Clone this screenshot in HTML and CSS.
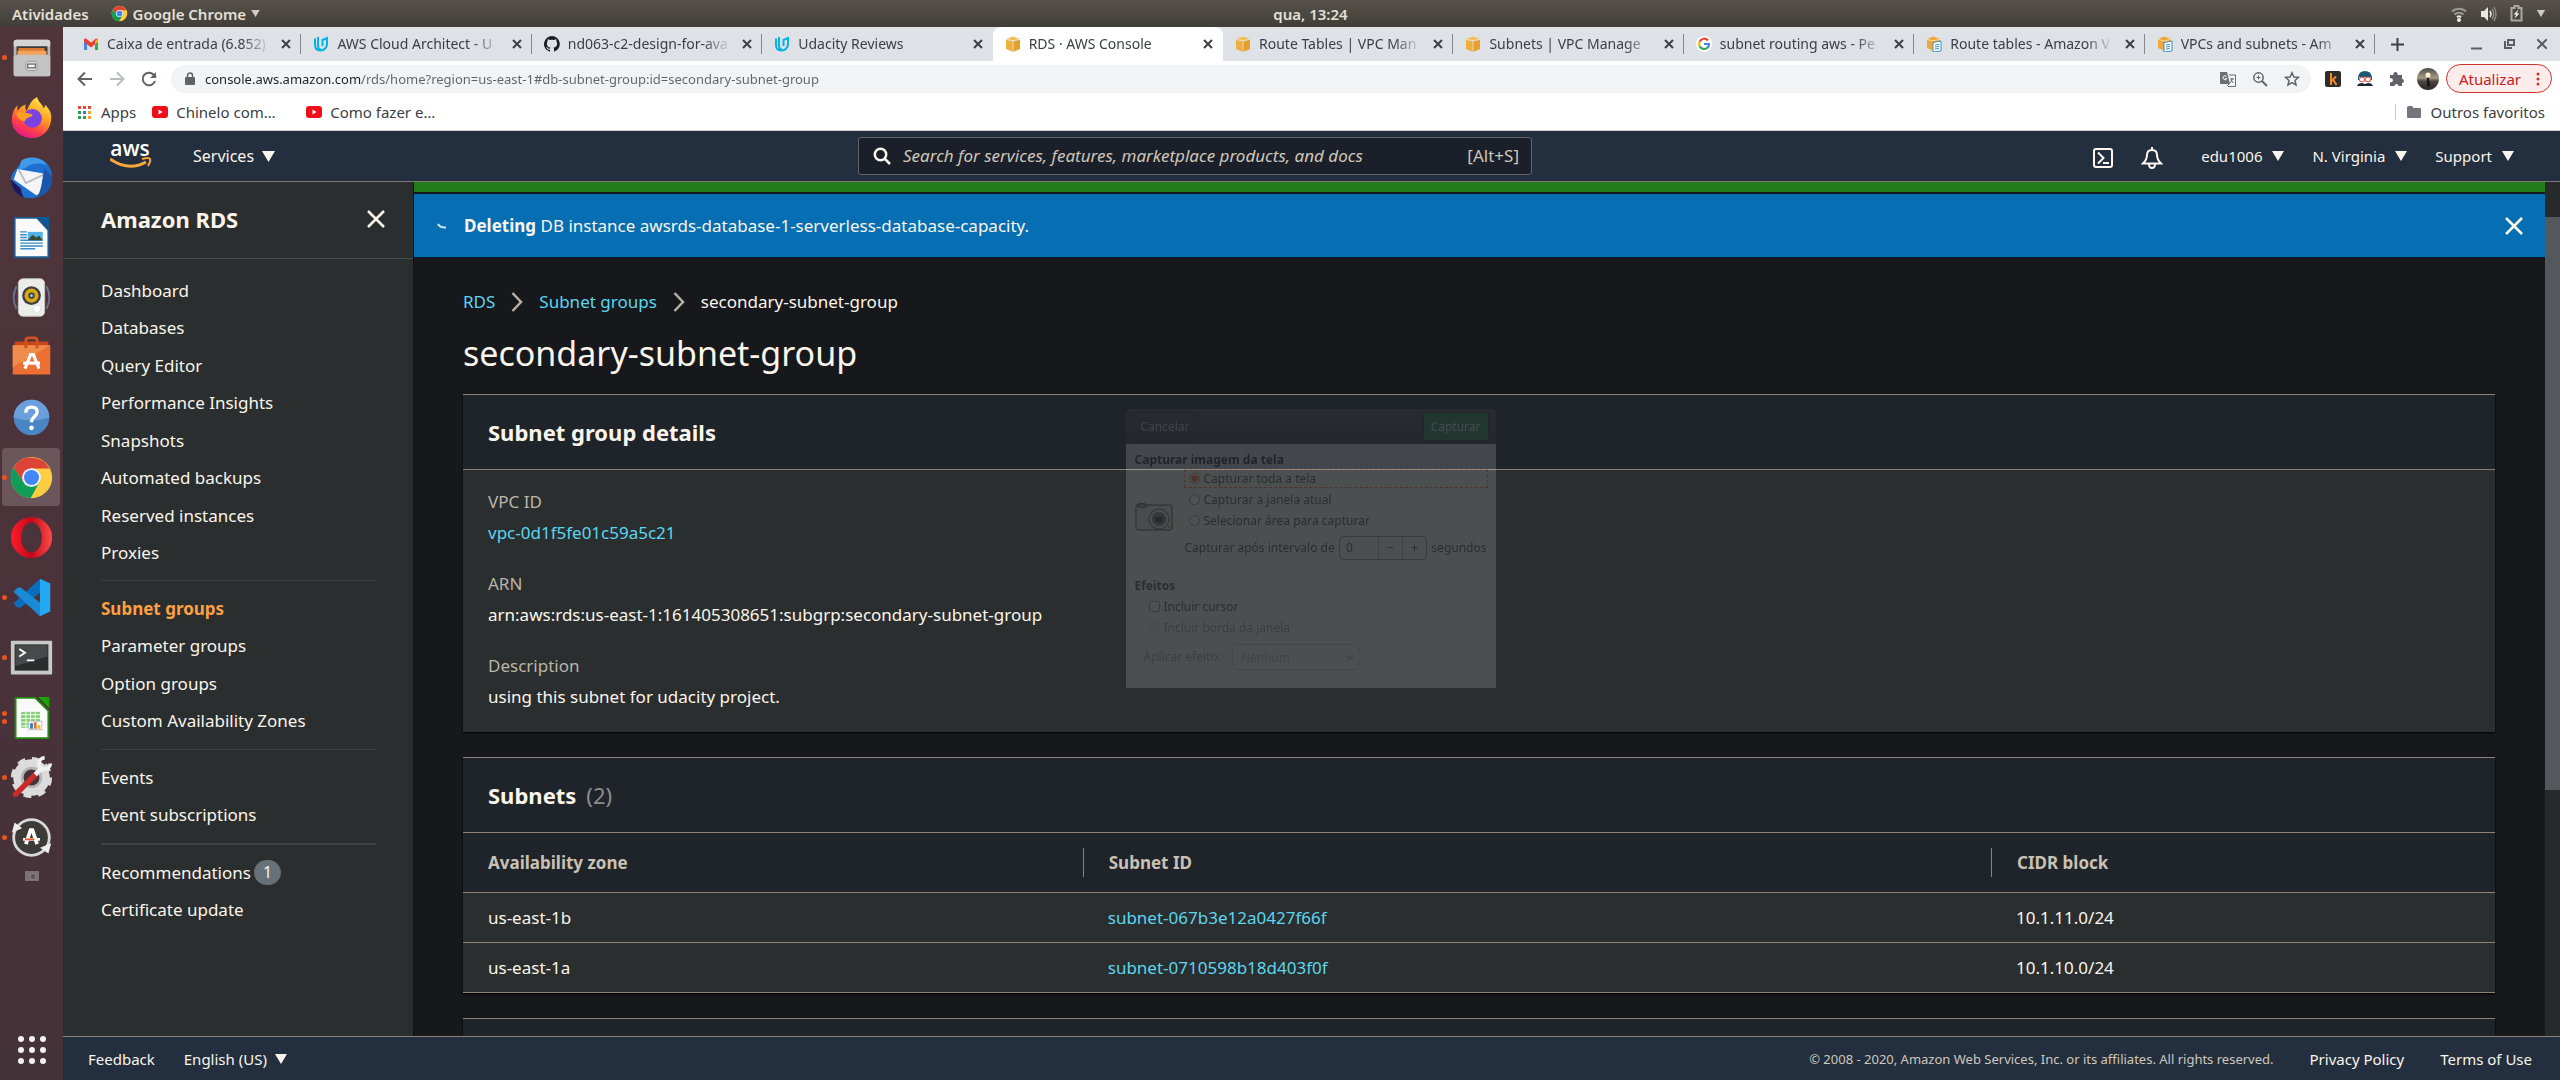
FILE: index.html
```html
<!DOCTYPE html>
<html lang="pt-BR">
<head>
<meta charset="utf-8">
<title>RDS · AWS Console</title>
<link rel="stylesheet" href="styles.css">
</head>
<body>
<svg class="defs" aria-hidden="true">
  <defs>
    <symbol id="i-chrome" viewBox="0 0 48 48">
      <circle cx="24" cy="24" r="22" fill="#ffcd40"/>
      <path d="M4.900 13A22 22 0 0 0 23 46l9.500-17L24 24 15 28z" fill="#0f9d58"/>
      <path d="M4.900 13a22 22 0 0 1 38.300 1.500H24l-9 14z" fill="#db4437"/>
      <circle cx="24" cy="24" r="10" fill="#f1f1f1"/>
      <circle cx="24" cy="24" r="8" fill="#4285f4"/>
    </symbol>
    <symbol id="i-x" viewBox="0 0 16 16"><path d="M4 4l8 8M12 4l-8 8" stroke="currentColor" stroke-width="2" fill="none"/></symbol>
    <symbol id="i-udacity" viewBox="0 0 16 16">
      <path d="M5 1v8c0 3 1 4.500 3 4.500M2 2.500v6C2 12 4 14.500 7.500 14.500S14 12 14 8V2L9.500 4v6" fill="none" stroke="#02b3e4" stroke-width="2"/>
    </symbol>
    <symbol id="i-cube" viewBox="0 0 16 16">
      <path d="M1 3.500 8 5v11l-7-3z" fill="#f0b03e"/><path d="M15 3.500 8 5v11l7-3z" fill="#e8a02c"/>
      <path d="M1 3 8 .5 15 3 8 4.500z" fill="#f5bd55"/><path d="M8 4.700V16M1 3.300 8 5l7-1.700" stroke="#dee1e6" stroke-width=".8" fill="none"/>
    </symbol>
    <symbol id="i-docs" viewBox="0 0 16 16">
      <path d="M1 3 7 .5 14 3v4H8v8l-7-3z" fill="#f0a83a"/><path d="M1 3.300 7 5l7-1.700" stroke="#fbdc9c" fill="none"/>
      <path d="M7 6.500 15 5v10l-8 1z" fill="#fff" stroke="#3a8fc9"/><path d="M9 9l4-.6M9 11l4-.5M9 13l4-.5" stroke="#3a8fc9"/>
    </symbol>
    <symbol id="i-youtube" viewBox="0 0 16 12"><rect width="16" height="12" rx="3" fill="#f00f18"/><path d="M6.500 3.500v5l4-2.500z" fill="#fff"/></symbol>
    <symbol id="i-caret" viewBox="0 0 12 10"><path d="M0 0h12L6 10z" fill="currentColor"/></symbol>
  </defs>
</svg>

<header class="topbar">
  <div class="topbar-left">
    <button class="plain">Atividades</button>
    <button class="plain app-menu"><svg width="17" height="17"><use href="#i-chrome"/></svg>Google Chrome<svg width="9" height="7"><use href="#i-caret"/></svg></button>
  </div>
  <button class="plain clock">qua, 13:24</button>
  <div class="topbar-right">
    <svg width="16" height="16" viewBox="0 0 16 16" fill="none" stroke="#9c9a92" stroke-width="2"><path d="M1 5.500a10 10 0 0 1 14 0M3.500 8.500a6.500 6.500 0 0 1 9 0"/><path d="M6 11.200a3 3 0 0 1 4 0" stroke="#f0eee8"/><circle cx="8" cy="14" r="1" fill="#f0eee8" stroke="#f0eee8"/></svg>
    <svg width="17" height="16" viewBox="0 0 17 16"><path d="M1 5h3l4-4v14l-4-4H1z" fill="#e8e6e0"/><path d="M10 5q2 3 0 6" stroke="#e8e6e0" stroke-width="1.500" fill="none"/><path d="M12 3q3.500 5 0 10M14 1q4 7 0 14" stroke="#8a8880" stroke-width="1.500" fill="none"/></svg>
    <svg width="13" height="17" viewBox="0 0 13 17"><path d="M1.500 3h3V1h4v2h3v12.500h-10z" fill="none" stroke="#aaa8a0" stroke-width="2"/><path d="M8.500 4.500 3.500 9.500h2.500L4.500 13.500l5-5H7z" fill="#f0eee8"/></svg>
    <svg class="tiny-caret" width="10" height="7"><use href="#i-caret"/></svg>
  </div>
</header>

<div class="desktop">
  <nav class="dock" aria-label="Dock">
    <a href="#" class="slot on" aria-label="Arquivos"><svg viewBox="0 0 48 48"><rect x="5" y="5" width="39" height="39" rx="3" fill="#b7b7b7"/><rect x="5" y="5" width="39" height="8" rx="3" fill="#d5d5d5"/><rect x="8" y="12" width="33" height="11" fill="#3c3a38"/><path d="M10 14h28v8H10z" fill="#e58133"/><path d="M9 17h31v5H9z" fill="#f4a35c"/><rect x="5" y="21" width="39" height="23" rx="2" fill="#c4c4c4"/><rect x="18" y="28" width="12" height="10" rx="2" fill="#d9d9d9" stroke="#999"/><rect x="20" y="31" width="8" height="4" fill="#f5f5f5" stroke="#444"/></svg></a>
    <a href="#" class="slot" aria-label="Firefox"><svg viewBox="0 0 48 48"><defs><linearGradient id="ff" x1=".8" y1="0" x2=".3" y2="1"><stop offset="0" stop-color="#fff14a"/><stop offset=".45" stop-color="#ff9a22"/><stop offset=".75" stop-color="#ff3d4c"/><stop offset="1" stop-color="#e0158c"/></linearGradient></defs><path d="M30 2c1 5 6 8 7 12 2-1 1-4 1-4 5 4 8 10 7 16-1 11-9 20-21 20S3 37 3 27c0-7 2-12 6-16v6c2-3 5-6 9-7-1 2-1 5 1 7 2-6 5-12 11-15z" fill="url(#ff)"/><circle cx="25" cy="25" r="10" fill="#7a42e0"/><path d="M8 19c6-2 10 0 14 1 3 0 4 2 2 3-4 1-6 2-7 5-5 0-9-4-9-9z" fill="#ff9d1e"/></svg></a>
    <a href="#" class="slot" aria-label="Thunderbird"><svg viewBox="0 0 48 48"><path d="M13 8C20-1 40 1 45 17c4 16-6 28-20 29C12 47 2 38 2 26c0-6 4-9 7-13z" fill="#1f6fd0"/><path d="M13 6c8-6 22-4 28 5-8-3-17-3-24 3l-7 2z" fill="#3f9be8"/><path d="M5 26l4-11 29 5-3 20-6 3z" fill="#f5f5f7"/><path d="M10 15l8 15 19-9" fill="none" stroke="#b8bcc8" stroke-width="2"/><path d="M2 26c0 9 6 17 14 19-3-4-3-7-3-9z" fill="#201858"/><path d="M38 14c-3 10-2 20-8 31 12-3 17-12 16-22z" fill="#1b56ad"/></svg></a>
    <a href="#" class="slot" aria-label="LibreOffice Writer"><svg viewBox="0 0 48 48"><path d="M6 3h24l12 13v29H6z" fill="#fafafa" stroke="#1d5c8f" stroke-width="2"/><path d="M30 2h13v13z" fill="#0b5a9a"/><path d="M12 18h7M12 21h7M12 24h7M12 27h24M12 30h24M12 33h24M12 36h16" stroke="#3b8dc7" stroke-width="1.500"/><rect x="20" y="18" width="16" height="9" fill="#4fb3ea"/><path d="M20 27l5-6 4 3 3-2 4 5z" fill="#374b34"/></svg></a>
    <a href="#" class="slot" aria-label="Rhythmbox"><svg viewBox="0 0 48 48"><path d="M8 12q-6 12 0 24M40 12q6 12 0 24" stroke="#68748e" stroke-width="2" fill="none"/><rect x="10" y="4" width="28" height="40" rx="5" fill="#ecece8" stroke="#c8c8c4"/><circle cx="24" cy="22" r="10" fill="#3c3f44"/><circle cx="24" cy="22" r="7.500" fill="#d8ab12"/><circle cx="24" cy="22" r="3.500" fill="#4a4d50"/><circle cx="24" cy="22" r="1.200" fill="#ddd"/><circle cx="30" cy="36" r="4" fill="#fff" stroke="#ddd"/></svg></a>
    <a href="#" class="slot" aria-label="Ubuntu Software"><svg viewBox="0 0 48 48"><path d="M6 7h36v5H6z" fill="#c9461b"/><path d="M4 11h40v31H4z" fill="#ee6f33"/><path d="M4 11h40L4 34z" fill="#f08c4c"/><path d="M18 14V6q0-3 3-3h6q3 0 3 3v8" fill="none" stroke="#d5501f" stroke-width="3"/><path d="M17 36l6-15h3l6 15M15 30h18" fill="none" stroke="#fff" stroke-width="3.500"/></svg></a>
    <a href="#" class="slot" aria-label="Ajuda"><svg viewBox="0 0 48 48"><circle cx="24" cy="24" r="19" fill="#4a86c5"/><path d="M5 24a19 19 0 0 1 38 0q-19 6-38 0z" fill="#6a9fdb"/><path d="M18 19q0-6 6-6t6 5c0 5-6 5-6 11" fill="none" stroke="#fff" stroke-width="3.500"/><circle cx="24" cy="35" r="2.500" fill="#fff"/></svg></a>
    <a href="#" class="slot on active" aria-label="Google Chrome"><svg><use href="#i-chrome"/></svg></a>
    <a href="#" class="slot" aria-label="Opera"><svg viewBox="0 0 48 48"><defs><linearGradient id="op" x1="0" y1="0" x2="1" y2="0"><stop offset="0" stop-color="#ff1b2d"/><stop offset=".5" stop-color="#c00a1a"/><stop offset="1" stop-color="#ff4b4b"/></linearGradient></defs><path fill-rule="evenodd" d="M24 2a22 22 0 1 0 0 44 22 22 0 0 0 0-44zm0 6c6 0 11 7 11 16s-5 16-11 16-11-7-11-16S18 8 24 8z" fill="url(#op)"/></svg></a>
    <a href="#" class="slot on" aria-label="Visual Studio Code"><svg viewBox="0 0 48 48"><path d="M33 4 5 30l3 4 4 1 22-17z" fill="#0a6ebd"/><path d="M33 44 5 18l3-4 4-1 22 17z" fill="#1a8ad6"/><path d="M33 4l11 5v30l-11 5z" fill="#25a8f2"/></svg></a>
    <a href="#" class="slot on" aria-label="Terminal"><svg viewBox="0 0 48 48"><rect x="2" y="6" width="44" height="36" rx="1" fill="#c9c9c7"/><rect x="6" y="10" width="36" height="28" fill="#2a2c2d"/><path d="M7 11h34v12L7 33z" fill="#48494b"/><path d="M11 15l6 4-6 4M19 27h8" stroke="#fff" stroke-width="2" fill="none"/></svg></a>
    <a href="#" class="slot on two" aria-label="LibreOffice Calc"><svg viewBox="0 0 48 48"><path d="M7 3h21l14 14v29H7z" fill="#fafafa" stroke="#238a12" stroke-width="2"/><path d="M31 2h12v12z" fill="#18a303"/><path d="M13 18h20v17H13z" fill="#7fd071"/><path d="M13 21h20M13 25h20M13 29h20M13 33h20M18 18v17M23 18v17M28 18v17" stroke="#fff"/><rect x="21" y="28" width="14" height="9" fill="#fff" stroke="#bbb"/><path d="M24 36v-6" stroke="#2d7fc6" stroke-width="3"/><path d="M28 36v-7" stroke="#e2702e" stroke-width="3"/><path d="M32 36v-4" stroke="#eebc2d" stroke-width="3"/></svg></a>
    <a href="#" class="slot on" aria-label="Configurações"><svg viewBox="0 0 48 48"><circle cx="24" cy="24" r="15" fill="none" stroke="#dcdcdc" stroke-width="9"/><circle cx="24" cy="24" r="19" fill="none" stroke="#dcdcdc" stroke-width="6" stroke-dasharray="8 6.900"/><circle cx="24" cy="24" r="10" fill="none" stroke="#b5b5b5" stroke-width="3"/><path d="M7 42l21-21" stroke="#c92a2a" stroke-width="6" stroke-linecap="round"/><path d="M28 21l7-7" stroke="#f0f0f0" stroke-width="5"/><path d="M44 9a6 6 0 1 1-6-6" fill="none" stroke="#f0f0f0" stroke-width="4"/></svg></a>
    <a href="#" class="slot on" aria-label="Atualizador de programas"><svg viewBox="0 0 48 48"><circle cx="24" cy="24" r="19" fill="#3d3b38" stroke="#d8d8d8" stroke-width="3"/><path d="M3 19l3-11 8 6zM45 30l-3 11-9-6z" fill="#eee"/><path d="M18 31l5-15h2l5 15" fill="none" stroke="#fff" stroke-width="4"/><path d="M15 26h18" stroke="#fff" stroke-width="3"/><path d="M17 26h10" stroke="#e95420" stroke-width="2"/></svg></a>
    <svg class="ghost" viewBox="0 0 14 10" aria-hidden="true"><rect width="14" height="10" rx="1" fill="#7d7074"/><circle cx="8" cy="5.500" r="3" fill="#5f4f56" stroke="#8f868a"/></svg>
    <a href="#" class="apps" aria-label="Mostrar aplicativos"><svg width="28" height="28" viewBox="0 0 28 28" fill="#f4f2f2"><circle cx="3" cy="3" r="3"/><circle cx="14" cy="3" r="3"/><circle cx="25" cy="3" r="3"/><circle cx="3" cy="14" r="3"/><circle cx="14" cy="14" r="3"/><circle cx="25" cy="14" r="3"/><circle cx="3" cy="25" r="3"/><circle cx="14" cy="25" r="3"/><circle cx="25" cy="25" r="3"/></svg></a>
  </nav>

  <div class="browser">
    <div class="tabstrip">
      <div class="tabs">
        <div class="tab"><svg viewBox="0 0 16 16"><path d="M1 3.500V14h3V7z" fill="#4285f4"/><path d="M15 3.500V14h-3V7z" fill="#34a853"/><path d="M1 3v3l7 5.500L15 6V3l-2-.5-5 4-5-4z" fill="#ea4335"/><path d="M12 5v3.500L15 6V3z" fill="#fbbc04"/></svg><span>Caixa de entrada (6.852)</span><button aria-label="Fechar"><svg><use href="#i-x"/></svg></button></div>
        <div class="tab"><svg><use href="#i-udacity"/></svg><span>AWS Cloud Architect - U</span><button aria-label="Fechar"><svg><use href="#i-x"/></svg></button></div>
        <div class="tab"><svg viewBox="0 0 16 16"><path d="M8 0a8 8 0 0 0-2.500 15.600c.4.100.5-.2.500-.4v-1.500c-2.200.5-2.700-1-2.700-1-.4-.9-.9-1.200-.9-1.200-.7-.5.100-.5.100-.5.800.1 1.200.8 1.200.8.700 1.300 1.900.9 2.300.7.100-.5.300-.9.500-1.100-1.800-.2-3.600-.9-3.600-4 0-.9.300-1.600.8-2.100-.1-.2-.4-1 .1-2.100 0 0 .7-.2 2.200.8a7.700 7.700 0 0 1 4 0c1.500-1 2.200-.8 2.200-.8.400 1.100.2 1.900.1 2.100.5.600.8 1.300.8 2.100 0 3.100-1.900 3.800-3.700 4 .3.300.6.800.6 1.500v2.200c0 .2.100.5.600.4A8 8 0 0 0 8 0z" fill="#1b1f23"/></svg><span>nd063-c2-design-for-ava</span><button aria-label="Fechar"><svg><use href="#i-x"/></svg></button></div>
        <div class="tab before-active"><svg><use href="#i-udacity"/></svg><span>Udacity Reviews</span><button aria-label="Fechar"><svg><use href="#i-x"/></svg></button></div>
        <div class="tab current"><svg><use href="#i-cube"/></svg><span>RDS · AWS Console</span><button aria-label="Fechar"><svg><use href="#i-x"/></svg></button></div>
        <div class="tab"><svg><use href="#i-cube"/></svg><span>Route Tables | VPC Man</span><button aria-label="Fechar"><svg><use href="#i-x"/></svg></button></div>
        <div class="tab"><svg><use href="#i-cube"/></svg><span>Subnets | VPC Manage</span><button aria-label="Fechar"><svg><use href="#i-x"/></svg></button></div>
        <div class="tab"><svg viewBox="0 0 16 16"><circle cx="8" cy="8" r="8" fill="#fff"/><g fill="none" stroke-width="2.200"><path d="M12 4.500A5 5 0 0 0 3.600 5.700" stroke="#ea4335"/><path d="M3.600 5.700a5 5 0 0 0 0 4.600" stroke="#fbbc05"/><path d="M3.600 10.300a5 5 0 0 0 7.700 1.500" stroke="#34a853"/><path d="M11.300 11.800A5 5 0 0 0 13 8H8" stroke="#4285f4"/></g></svg><span>subnet routing aws - Pe</span><button aria-label="Fechar"><svg><use href="#i-x"/></svg></button></div>
        <div class="tab"><svg><use href="#i-docs"/></svg><span>Route tables - Amazon V</span><button aria-label="Fechar"><svg><use href="#i-x"/></svg></button></div>
        <div class="tab"><svg><use href="#i-docs"/></svg><span>VPCs and subnets - Am</span><button aria-label="Fechar"><svg><use href="#i-x"/></svg></button></div>
      </div>
      <div class="window-tools">
        <button class="plain" aria-label="Nova guia"><svg width="13" height="13" viewBox="0 0 13 13"><path d="M6.500 0v13M0 6.500h13" stroke="#3c4043" stroke-width="2"/></svg></button>
        <div class="window-buttons">
          <button class="plain" aria-label="Minimizar"><svg width="11" height="12" viewBox="0 0 11 12"><path d="M0 10.500h11" stroke="#5a5d61" stroke-width="2"/></svg></button>
          <button class="plain" aria-label="Restaurar"><svg width="11" height="12" viewBox="0 0 11 12" fill="none" stroke="#5a5d61" stroke-width="2"><path d="M4 2h6v5H4zM1 3v7h7"/></svg></button>
          <button class="plain" aria-label="Fechar janela"><svg width="10" height="10" viewBox="0 0 10 10"><path d="M0 0l10 10M10 0 0 10" stroke="#5a5d61" stroke-width="2"/></svg></button>
        </div>
      </div>
    </div>

    <div class="toolbar">
      <div class="nav-buttons">
        <button class="plain" aria-label="Voltar"><svg width="16" height="16" viewBox="0 0 16 16"><path d="M15 8H2M8 1.500 1.500 8 8 14.500" fill="none" stroke="#5f6368" stroke-width="2"/></svg></button>
        <button class="plain" aria-label="Avançar"><svg width="16" height="16" viewBox="0 0 16 16"><path d="M1 8h13M8 1.500 14.500 8 8 14.500" fill="none" stroke="#babcbe" stroke-width="2"/></svg></button>
        <button class="plain" aria-label="Recarregar"><svg width="16" height="16" viewBox="0 0 16 16"><path d="M14 10a6.300 6.300 0 1 1-1.500-6.500L15 6" fill="none" stroke="#5f6368" stroke-width="2"/><path d="M15 1v6H9z" fill="#5f6368"/></svg></button>
      </div>
      <div class="omnibox">
        <svg width="10" height="13" viewBox="0 0 10 13"><rect y="5" width="10" height="8" rx="1" fill="#5f6368"/><path d="M2.500 6V3.500a2.500 2.500 0 0 1 5 0V6" fill="none" stroke="#5f6368" stroke-width="1.500"/></svg>
        <input aria-label="Endereço" type="text" value="console.aws.amazon.com/rds/home?region=us-east-1#db-subnet-group:id=secondary-subnet-group">
        <div class="omni-icons">
          <svg width="16" height="16" viewBox="0 0 16 16"><path d="M0 1h7l3 12H1q-1 0-1-1z" fill="#6b6f73"/><path d="M9 4h6.500v11.500H8M9 13l-2 2" fill="none" stroke="#6b6f73"/><path d="M6.500 5.500a2 2 0 1 0 .3 2H5" stroke="#fff" fill="none"/><path d="M10 8h4M12 7v1q0 2-2 4M11 9l2.500 3" stroke="#6b6f73" fill="none"/></svg>
          <svg width="16" height="16" viewBox="0 0 16 16" fill="none" stroke="#5f6368"><circle cx="6.500" cy="6.500" r="4.700" stroke-width="1.500"/><path d="M10 10l5 5" stroke-width="2"/><path d="M4.500 6.500h4M6.500 4.500v4"/></svg>
          <svg width="16" height="16" viewBox="0 0 16 16"><path d="M8 1.800l1.900 4.200 4.500.4-3.400 3 1 4.500L8 11.500l-4 2.400 1-4.500-3.400-3 4.500-.4z" fill="none" stroke="#5f6368" stroke-width="1.500"/></svg>
        </div>
      </div>
      <div class="extensions">
        <svg width="16" height="16" viewBox="0 0 16 16"><rect width="16" height="16" rx="2" fill="#2c2c2c"/><path d="M6 2v12M11 5.500 6.500 10M8 8.500 11.500 14" stroke="#f58a1f" stroke-width="2" fill="none"/></svg>
        <svg width="16" height="16" viewBox="0 0 16 16"><path d="M1 6q1-6 7-6t7 6v3H1z" fill="#1d5a72"/><path d="M2 6h12v5H2z" fill="#f3c5b5"/><circle cx="5" cy="8.500" r="2.500" fill="#fff" stroke="#e0493e"/><circle cx="11" cy="8.500" r="2.500" fill="#fff" stroke="#e0493e"/><path d="M0 15q1-3 5-3l3 1 3-1q4 0 5 3z" fill="#1c2733"/></svg>
        <svg width="16" height="16" viewBox="0 0 16 16"><path d="M1 4h3.500a2.200 2.200 0 1 1 4 0H13v4a2 2 0 1 1 0 4v3H9.500a2 2 0 1 0-4 0H1v-4a2 2 0 1 0 0-3.500z" fill="#5f6368"/></svg>
        <svg width="22" height="22" viewBox="0 0 22 22"><defs><linearGradient id="av" x1="0" y1="0" x2="0" y2="1"><stop offset="0" stop-color="#4d4b49"/><stop offset=".45" stop-color="#a89a88"/><stop offset=".6" stop-color="#4a4542"/><stop offset="1" stop-color="#2b2623"/></linearGradient></defs><circle cx="11" cy="11" r="11" fill="url(#av)"/><circle cx="11" cy="7" r="2.500" fill="#fff3cf"/><path d="M10 10h2l1 8h-3z" fill="#151210"/></svg>
      </div>
      <button class="update">Atualizar<svg width="4" height="14" viewBox="0 0 4 14" fill="#d0312d"><circle cx="2" cy="2" r="1.500"/><circle cx="2" cy="7" r="1.500"/><circle cx="2" cy="12" r="1.500"/></svg></button>
    </div>

    <div class="bookmarks">
      <a href="#" class="bm-apps"><svg width="13" height="13" viewBox="0 0 13 13"><path d="M0 0h3v3H0zM5 0h3v3H5zM10 0h3v3h-3z" fill="#e8453c"/><path d="M0 5h3v3H0zM0 10h3v3H0z" fill="#2f9e57"/><path d="M5 5h3v3H5z" fill="#2b7de9"/><path d="M5 10h3v3H5z" fill="#2f9e57"/><path d="M10 5h3v3h-3zM10 10h3v3h-3z" fill="#f3a32b"/></svg>Apps</a>
      <a href="#" class="bm"><svg width="16" height="12"><use href="#i-youtube"/></svg>Chinelo com…</a>
      <a href="#" class="bm"><svg width="16" height="12"><use href="#i-youtube"/></svg>Como fazer e…</a>
      <a href="#" class="bm-other"><svg width="14" height="12" viewBox="0 0 14 12"><path d="M0 1.500Q0 0 1.500 0H5l1.500 2H13q1 0 1 1v8q0 1-1 1H1q-1 0-1-1z" fill="#72767a"/></svg>Outros favoritos</a>
    </div>

    <div class="console">
      <header class="aws-head">
        <div class="aws-left">
          <a href="#" class="aws-logo" aria-label="AWS"><svg width="42" height="28" viewBox="0 0 42 28"><text x="20" y="14" text-anchor="middle" class="logo-text">aws</text><path d="M0 17q19 13 36 3" fill="none" stroke="#f7a838" stroke-width="3"/><path d="M32 17q7-2 8 0t-2 7" fill="none" stroke="#f7a838" stroke-width="2"/></svg></a>
          <button class="plain menu">Services<svg width="13" height="11"><use href="#i-caret"/></svg></button>
        </div>
        <label class="search"><svg width="18" height="18" viewBox="0 0 18 18" fill="none" stroke="#fdf8ef" stroke-width="2.500"><circle cx="7.500" cy="7.500" r="5.700"/><path d="M11.500 11.500 17 17"/></svg><input type="text" placeholder="Search for services, features, marketplace products, and docs" aria-label="Search"><span>[Alt+S]</span></label>
        <div class="aws-right">
          <button class="plain icon-button" aria-label="CloudShell"><svg width="20" height="20" viewBox="0 0 20 20" fill="none" stroke="#fdf8ef" stroke-width="2"><rect x="1" y="1" width="18" height="18" rx="2"/><path d="M5 4.500 10.500 10 5 15.500M10 15h6"/></svg></button>
          <button class="plain icon-button bell" aria-label="Notifications"><svg width="22" height="22" viewBox="0 0 22 22" fill="none" stroke="#fdf8ef" stroke-width="2"><path d="M2 16.500q4-4 4-8.500 0-5 5-5t5 5q0 4.500 4 8.500zM11 3V0M8 17q0 4 3 4t3-4"/></svg></button>
          <button class="plain menu">edu1006<svg width="12" height="10"><use href="#i-caret"/></svg></button>
          <button class="plain menu">N. Virginia<svg width="12" height="10"><use href="#i-caret"/></svg></button>
          <button class="plain menu">Support<svg width="12" height="10"><use href="#i-caret"/></svg></button>
        </div>
      </header>

      <div class="workspace">
        <aside class="sidebar">
          <div class="side-title"><h2>Amazon RDS</h2><button class="plain" aria-label="Close"><svg width="18" height="18" viewBox="0 0 18 18"><path d="M1 1l16 16M17 1 1 17" stroke="#fdf8ef" stroke-width="2.500"/></svg></button></div>
          <ul class="group eight">
            <li><a href="#">Dashboard</a></li><li><a href="#">Databases</a></li><li><a href="#">Query Editor</a></li><li><a href="#">Performance Insights</a></li><li><a href="#">Snapshots</a></li><li><a href="#">Automated backups</a></li><li><a href="#">Reserved instances</a></li><li><a href="#">Proxies</a></li>
          </ul>
          <ul class="group four">
            <li><a href="#" class="selected">Subnet groups</a></li><li><a href="#">Parameter groups</a></li><li><a href="#">Option groups</a></li><li><a href="#">Custom Availability Zones</a></li>
          </ul>
          <ul class="group">
            <li><a href="#">Events</a></li><li><a href="#">Event subscriptions</a></li>
          </ul>
          <ul class="group thick">
            <li><a href="#">Recommendations</a><span class="badge">1</span></li><li><a href="#">Certificate update</a></li>
          </ul>
        </aside>

        <main class="main">
          <div class="flash success"></div>
          <div class="flash info" role="status">
            <svg width="10" height="6" viewBox="0 0 10 6"><path d="M1 1q2 4 8 3.500" fill="none" stroke="#cfe6f5" stroke-width="2"/></svg>
            <p><b>Deleting</b> DB instance awsrds-database-1-serverless-database-capacity.</p>
            <button class="plain" aria-label="Dismiss"><svg width="18" height="18" viewBox="0 0 18 18"><path d="M1 1l16 16M17 1 1 17" stroke="#fdf8ef" stroke-width="2.500"/></svg></button>
          </div>
          <div class="content">
            <nav class="crumbs" aria-label="Breadcrumb">
              <a href="#">RDS</a>
              <svg width="12" height="20" viewBox="0 0 12 20"><path d="M1.500 1 10 10l-8.500 9" fill="none" stroke="#b9b0a2" stroke-width="2.500"/></svg>
              <a href="#">Subnet groups</a>
              <svg width="12" height="20" viewBox="0 0 12 20"><path d="M1.500 1 10 10l-8.500 9" fill="none" stroke="#b9b0a2" stroke-width="2.500"/></svg>
              <span>secondary-subnet-group</span>
            </nav>
            <h1>secondary-subnet-group</h1>
            <section class="panel">
              <h2>Subnet group details</h2>
              <dl>
                <div><dt>VPC ID</dt><dd><a href="#">vpc-0d1f5fe01c59a5c21</a></dd></div>
                <div><dt>ARN</dt><dd>arn:aws:rds:us-east-1:161405308651:subgrp:secondary-subnet-group</dd></div>
                <div><dt>Description</dt><dd>using this subnet for udacity project.</dd></div>
              </dl>
            </section>
            <section class="panel">
              <h2>Subnets <span class="count">(2)</span></h2>
              <table>
                <colgroup><col class="c-zone"><col class="c-id"><col></colgroup>
                <thead><tr><th scope="col"><div>Availability zone</div></th><th scope="col"><div>Subnet ID</div></th><th scope="col"><div>CIDR block</div></th></tr></thead>
                <tbody>
                  <tr><td>us-east-1b</td><td><a href="#">subnet-067b3e12a0427f66f</a></td><td>10.1.11.0/24</td></tr>
                  <tr><td>us-east-1a</td><td><a href="#">subnet-0710598b18d403f0f</a></td><td>10.1.10.0/24</td></tr>
                </tbody>
              </table>
            </section>
            <section class="panel next"></section>
          </div>
        </main>
        <div class="scrollbar"><div class="thumb"></div></div>
      </div>

      <footer class="aws-foot">
        <a href="#">Feedback</a>
        <button class="plain menu">English (US)<svg width="12" height="10"><use href="#i-caret"/></svg></button>
        <span class="copyright">© 2008 - 2020, Amazon Web Services, Inc. or its affiliates. All rights reserved.</span>
        <a href="#">Privacy Policy</a>
        <a href="#">Terms of Use</a>
      </footer>
    </div>

    <form class="capture">
      <div class="cap-head"><button type="button">Cancelar</button><button type="button" class="go">Capturar</button></div>
      <div class="cap-body">
        <h3>Capturar imagem da tela</h3>
        <div class="cap-main">
          <svg class="camera" width="38" height="28" viewBox="0 0 38 28"><rect x="1" y="2" width="36" height="25" rx="2" fill="#e0e0e0" stroke="#222"/><ellipse cx="7" cy="2.500" rx="5" ry="2" fill="none" stroke="#222"/><circle cx="24" cy="16" r="10" fill="none" stroke="#444"/><circle cx="24" cy="16" r="7" fill="#666"/><rect x="20" y="14" width="7" height="5" fill="#0c1c3c"/><circle cx="34" cy="24" r="1" fill="#e07030"/></svg>
          <div class="cap-options">
            <label class="focus"><input type="radio" name="area" checked>Capturar toda a tela</label>
            <label><input type="radio" name="area">Capturar a janela atual</label>
            <label><input type="radio" name="area">Selecionar área para capturar</label>
            <div class="delay"><label for="delay">Capturar após intervalo de</label><div class="spin"><input id="delay" type="text" value="0"><button type="button">−</button><button type="button">+</button></div><span>segundos</span></div>
          </div>
        </div>
        <h3>Efeitos</h3>
        <div class="cap-effects">
          <label><input type="checkbox">Incluir cursor</label>
          <label class="off"><input type="checkbox" checked disabled>Incluir borda da janela</label>
        </div>
        <div class="apply off"><label for="effect">Aplicar efeito:</label><select id="effect" disabled><option>Nenhum</option></select></div>
      </div>
    </form>
  </div>
</div>
</body>
</html>
```

FILE: styles.css
```css
:root {
  --ink: #faf5ec;
  --muted: #bcb4a8;
  --link: #5cd6f0;
  --rule: #8c8373;
  --page: #16181c;
  --surface: #2a2e2f;
  --head: #1f232a;
  --navy: #232f3e;
}
* { box-sizing: border-box; }
body {
  margin: 0;
  height: 100vh;
  display: flex;
  flex-direction: column;
  overflow: hidden;
  font: 15px/20px "Noto Sans", "Open Sans", sans-serif;
  color: #3c4043;
}
h1, h2, h3, p, ul, dl, dd { margin: 0; padding: 0; }
ul { list-style: none; }
a { color: inherit; text-decoration: none; }
svg { display: block; flex: none; }
button, input, select { font: inherit; color: inherit; }
.defs { position: absolute; width: 0; height: 0; }
.plain { border: 0; padding: 0; background: none; display: flex; align-items: center; }

/* System bar */
.topbar {
  height: 27px;
  flex: none;
  display: grid;
  grid-template-columns: 1fr auto 1fr;
  align-items: center;
  padding: 0 14px 0 12px;
  background: linear-gradient(#57534b, #403d38);
  color: #e4e0d8;
  font-weight: 600;
}
.topbar-left { display: flex; gap: 22px; }
.app-menu { gap: 5px; }
.clock { padding-left: 63px; }
.topbar-right { display: flex; justify-content: flex-end; align-items: center; gap: 13px; }
.app-menu svg:last-child, .tiny-caret { color: #cfccc5; }

/* Dock */
.desktop { flex: 1; min-height: 0; display: flex; }
.dock {
  width: 63px;
  flex: none;
  display: flex;
  flex-direction: column;
  align-items: center;
  padding-bottom: 16px;
  background: linear-gradient(#50353b, #4a323a 60%, #433238);
}
.slot {
  width: 58px;
  height: 58px;
  margin: 1px 1px 1px 0;
  flex: none;
  display: grid;
  place-items: center;
  position: relative;
  border-radius: 4px;
}
.slot svg { width: 45px; height: 45px; }
.slot.active { background: #6b565c; }
.slot.on::before {
  content: "";
  position: absolute;
  left: 0;
  width: 5px;
  height: 5px;
  border-radius: 50%;
  background: #e95420;
}
.slot.two::before { transform: translateY(-4px); box-shadow: 0 8px #e95420; }
.ghost { width: 14px; height: 10px; margin-top: 4px; }
.apps { margin-top: auto; }

/* Browser chrome */
.browser { flex: 1; min-width: 0; display: flex; flex-direction: column; position: relative; background: #fff; }
.tabstrip { height: 34px; flex: none; display: flex; background: #dee1e6; }
.tabs { flex: 1; min-width: 0; display: flex; padding-left: 8px; font-size: 14px; }
.tab {
  flex: 1;
  min-width: 0;
  display: flex;
  align-items: center;
  gap: 8px;
  padding: 0 7px 0 12px;
  position: relative;
}
.tab::after { content: ""; position: absolute; right: 0; top: 7px; height: 20px; width: 1px; background: #85888d; }
.tab.current::after, .tab.before-active::after { display: none; }
.tab.current { background: #fff; border-radius: 8px 8px 0 0; }
.tab svg { width: 16px; height: 16px; }
.tab span {
  flex: 1;
  min-width: 0;
  overflow: hidden;
  white-space: nowrap;
  mask-image: linear-gradient(to right, #000 calc(100% - 28px), transparent);
}
.tab button { border: 0; padding: 0; background: none; width: 16px; height: 16px; color: #3c4043; }
.window-tools { width: 185px; display: flex; justify-content: space-between; align-items: center; padding: 0 13px 0 16px; }
.window-buttons { display: flex; gap: 22px; align-items: center; }

.toolbar { height: 37px; flex: none; display: flex; align-items: center; padding: 0 8px 2px 14px; }
.nav-buttons { display: flex; gap: 16px; margin-right: 14px; }
.omnibox { flex: 1; height: 28px; display: flex; align-items: center; gap: 10px; padding: 0 11px 0 14px; border-radius: 14px; background: #f1f3f4; }
.omnibox input {
  flex: 1;
  min-width: 0;
  border: 0;
  padding: 0;
  outline: 0;
  font-size: 13px;
  color: transparent;
  background: linear-gradient(to right, #202124 157px, #5f6368 0) text;
}
.omni-icons { display: flex; gap: 16px; }
.extensions { display: flex; align-items: center; gap: 16px; margin: 0 7px 0 14px; }
.extensions svg:last-child { margin-left: -4px; }
.update {
  height: 29px;
  display: flex;
  align-items: center;
  gap: 15px;
  padding: 0 11px 0 12px;
  border: 1px solid #d0312d;
  border-radius: 15px;
  background: #fcecec;
  color: #c5221f;
}
.bookmarks { height: 33px; flex: none; display: flex; align-items: center; padding: 0 15px 4px 15px; border-bottom: 1px solid #cfd1d4; }
.bookmarks a { display: flex; align-items: center; gap: 10px; }
.bm-apps { margin-right: 16px; }
.bookmarks .bm { gap: 8px; width: 154px; }
.bookmarks .bm-other { margin-left: auto; height: 16px; padding-left: 11px; border-left: 1px solid #c4c6c9; }

/* Console header */
.console { flex: 1; min-height: 0; display: flex; flex-direction: column; background: var(--page); color: var(--ink); font-size: 17px; }
.aws-head {
  height: 51px;
  flex: none;
  display: grid;
  grid-template-columns: 795fr 674fr 1028fr;
  align-items: center;
  background: var(--navy);
  border-bottom: 1px solid #7d7a74;
  font-size: 16px;
}
.aws-left { display: flex; align-items: center; gap: 41px; padding-left: 47px; }
.logo-text { font: 600 21px "Open Sans", sans-serif; fill: #fff; }
.menu { gap: 8px; }
.search {
  height: 38px;
  display: flex;
  align-items: center;
  gap: 12px;
  padding: 0 12px 0 14px;
  border: 1px solid #5f646b;
  border-radius: 3px;
  background: #1a1f29;
  color: #cfc6b8;
  font-size: 17px;
}
.search input { flex: 1; min-width: 0; border: 0; padding: 0; background: none; outline: 0; }
.search input::placeholder { color: #cfc6b8; font-style: italic; opacity: 1; }
.aws-right { display: flex; align-items: center; justify-content: flex-end; gap: 28px; padding-right: 46px; font-size: 15px; }
.aws-right .menu { gap: 10px; }
.icon-button { padding-top: 4px; }
.bell { margin-right: 10px; }

/* Navigation panel */
.workspace { flex: 1; min-height: 0; display: flex; }
.sidebar { width: 350px; flex: none; background: var(--surface); }
.side-title { height: 77px; display: flex; justify-content: space-between; align-items: center; padding: 0 28px 2px 38px; border-bottom: 1px solid #474b4c; }
.side-title h2 { font-size: 22px; line-height: 30px; }
.group { height: 94px; margin: 0 37px 0 38px; padding: 9px 0; display: grid; grid-auto-rows: 1fr; align-items: center; border-top: 1px solid #3d4142; }
.group.eight { height: 321px; padding: 13px 0 8px; border: 0; }
.group.four { height: 169px; }
.group.thick { border-top-width: 2px; }
.group li { display: flex; align-items: center; gap: 3px; }
.selected { color: #ff9f43; font-weight: 700; }
.badge { padding: 0 9px; height: 25px; line-height: 25px; border-radius: 13px; background: #687078; font-size: 16px; }

/* Main area */
.main { flex: 1; min-width: 0; overflow: hidden; border-left: 1px solid #0f1113; }
.flash.success { height: 10px; margin-bottom: 2px; background: #217d1b; }
.flash.info { height: 64px; display: flex; align-items: center; gap: 17px; padding: 0 22px 0 23px; background: #066fb3; border-bottom: 1px solid #0a2233; }
.flash p { flex: 1; }
.content { padding: 30px 50px 0 49px; }
.crumbs { display: flex; align-items: center; gap: 16px; height: 28px; }
.crumbs a, .panel a { color: var(--link); }
h1 { margin: 14px 0 18px; font-size: 34px; line-height: 46px; font-weight: 400; }
.panel { margin-bottom: 25px; background: var(--surface); border-top: 1px solid var(--rule); box-shadow: 0 1px 2px #000; }
.panel h2 { height: 75px; padding: 0 25px; display: flex; align-items: center; gap: 10px; background: var(--head); border-bottom: 1px solid var(--rule); font-size: 22px; }
.count { color: #8f8d8a; font-weight: 400; }
dl { display: flex; flex-direction: column; gap: 20px; padding: 16px 25px 20px; }
dt, dd { line-height: 31px; }
dt { color: var(--muted); }
table { width: 100%; table-layout: fixed; border-spacing: 0; }
.c-zone { width: 30.5%; }
.c-id { width: 44.7%; }
th, td { padding: 0; text-align: left; border-bottom: 1px solid var(--rule); }
th { height: 60px; background: var(--head); color: #c9c1b4; }
th div { height: 29px; line-height: 29px; padding-left: 25px; }
th + th div { border-left: 1px solid var(--rule); }
td { height: 50px; padding-left: 25px; }
.panel.next { height: 200px; background: var(--head); }
.scrollbar { width: 15px; flex: none; padding-top: 35px; background: #262a2b; }
.thumb { height: 70%; background: #54585c; }

/* Console footer */
.aws-foot { height: 44px; flex: none; display: flex; align-items: center; gap: 36px; padding: 0 28px 0 25px; background: var(--navy); border-top: 1px solid var(--rule); font-size: 15px; }
.aws-foot a:first-child { margin-right: -7px; }
.copyright { margin-left: auto; color: #cfc8bc; font-size: 13px; }

/* Fading capture dialog */
.capture {
  position: absolute;
  top: 382px;
  left: 50%;
  width: 370px;
  margin-left: -186px;
  height: 279px;
  opacity: .17;
  border-radius: 6px 6px 0 0;
  overflow: hidden;
  background: #f2f1f0;
  color: #2c2b28;
  font-size: 12px;
  white-space: nowrap;
}
.cap-head { height: 35px; display: flex; justify-content: space-between; align-items: center; padding: 0 7px; background: linear-gradient(#57534b, #403d38); }
.cap-head button { height: 29px; padding: 0 7px; border: 1px solid #33312d; border-radius: 4px; background: none; color: #dfdbd2; }
.cap-head .go { background: #2f9447; color: #fff; }
.cap-body { padding: 6px 9px; }
.cap-body h3 { font-size: 12px; line-height: 20px; }
.cap-main { display: flex; align-items: center; gap: 12px; }
.cap-options { flex: 1; }
.cap-options > label, .cap-effects label { display: flex; align-items: center; gap: 4px; height: 21px; }
.cap-options > label { height: 17px; margin-bottom: 4px; padding-left: 4px; }
.cap-options .focus { outline: 1px dashed #e95420; }
.capture input[type="radio"], .capture input[type="checkbox"] { width: 11px; height: 11px; margin: 0; accent-color: #e95420; }
.delay { display: flex; align-items: center; justify-content: space-between; height: 30px; }
.spin { display: flex; height: 24px; width: 88px; border: 1px solid #888; border-radius: 4px; }
.spin input { width: 38px; border: 0; padding: 0 6px; background: none; }
.spin button { flex: 1; padding: 0; border: 0; border-left: 1px solid #aaa; background: none; }
.cap-main + h3 { margin-top: 13px; }
.cap-effects { padding-left: 14px; }
.off { opacity: .5; }
.apply { display: flex; align-items: center; gap: 11px; padding: 6px 0 0 9px; }
.apply select { width: 127px; height: 26px; padding: 0 4px; border: 1px solid #666; border-radius: 4px; background: none; }
```
